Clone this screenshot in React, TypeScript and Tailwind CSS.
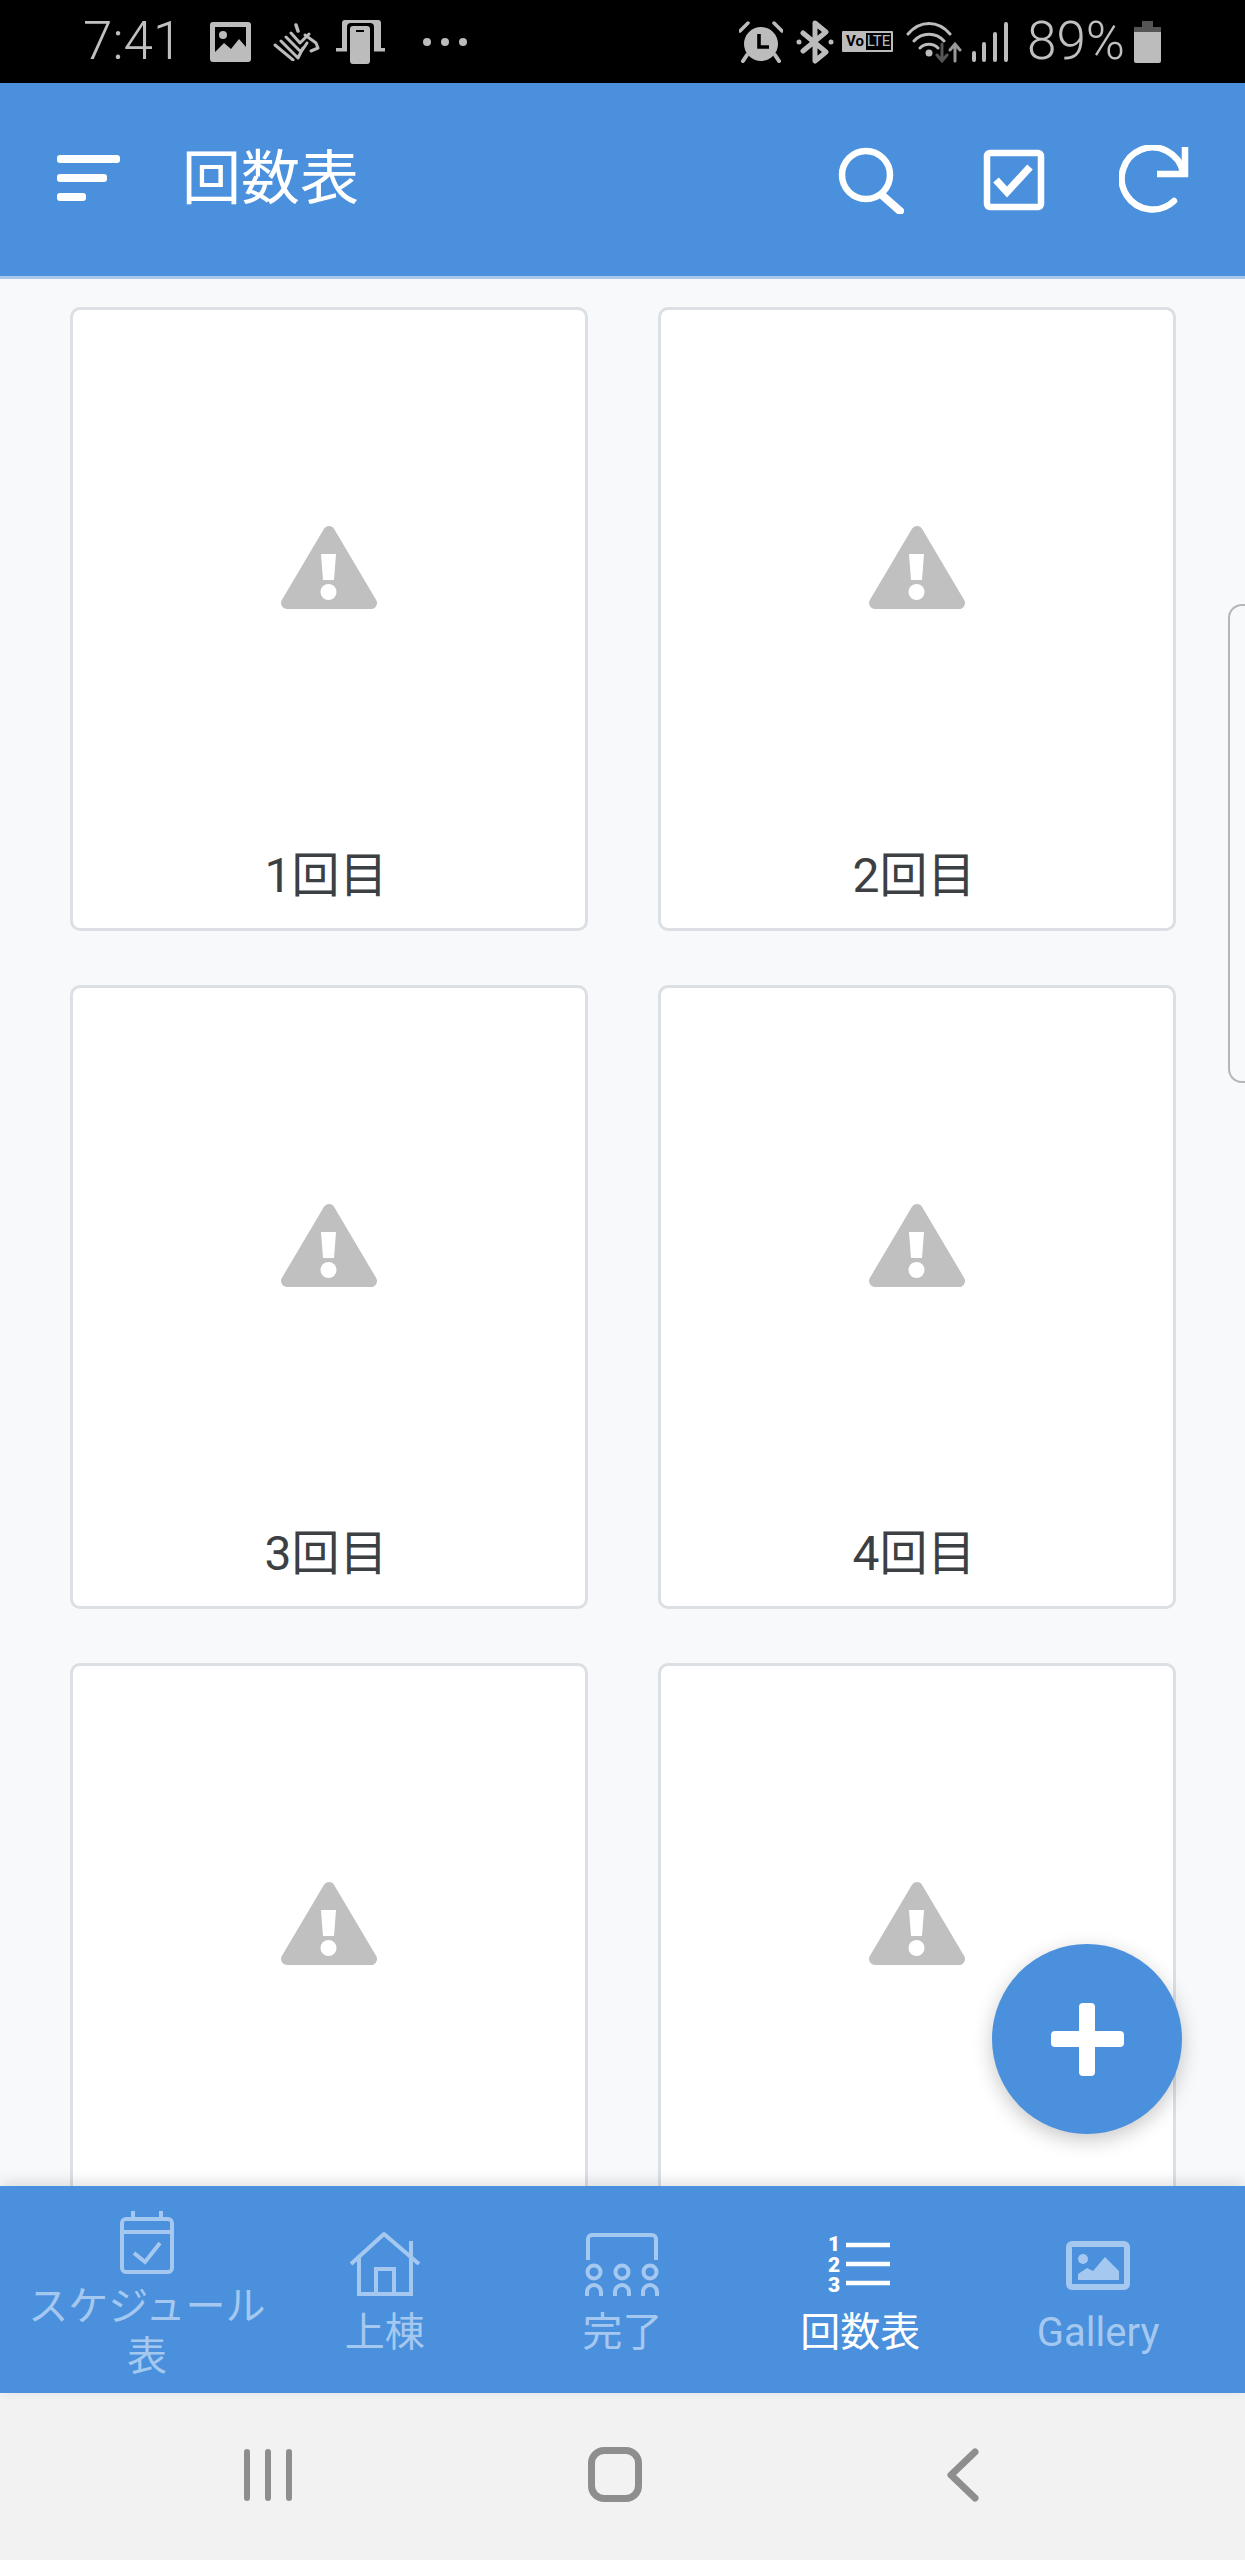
const FONT = "font-['Roboto','Noto_Sans_CJK_JP',sans-serif]";

function StatusLeft() {
  return (
    <div className="flex items-center">
      <span className="ml-[83px] w-[98px] text-[53px] font-light leading-[83px] text-[#c0c0c0]">7:41</span>
      <svg className="ml-[29px]" width="41" height="40" viewBox="0 0 41 40">
        <rect width="41" height="40" rx="3" fill="#bcbcbc" />
        <rect x="5" y="5" width="31" height="30" fill="#000" />
        <circle cx="13" cy="13" r="4" fill="#bcbcbc" />
        <path d="M5 30 L14 21 L21 27 L29 17 L36 25 V35 H5 Z" fill="#bcbcbc" />
      </svg>
      <svg className="ml-[22px]" width="48" height="38" viewBox="0 0 48 38" fill="none" stroke="#bcbcbc" strokeWidth="3" strokeLinecap="round" strokeLinejoin="round">
        <path d="M2 22 L20 37 M8 18 L25 35 L30 25 M13 14 L28 29 L34 20 M18 10 L27 20 L36 11" />
        <path d="M23 2 L25 8" strokeWidth="3.5" />
        <path d="M32 12 L43 20 L45 25 L38 28" />
      </svg>
      <svg className="ml-[15px]" width="49" height="44" viewBox="0 0 49 44">
        <path d="M6 3 a3 3 0 0 1 3 -3 H42 a3 3 0 0 1 3 3 V31 H6 Z" fill="#bcbcbc" />
        <rect y="28" width="49" height="3.5" fill="#bcbcbc" />
        <rect x="11" y="3" width="27" height="41" rx="4" fill="#000" />
        <rect x="14" y="6" width="20" height="38" rx="3" fill="#bcbcbc" />
        <rect x="20" y="10" width="8" height="2" fill="#000" />
      </svg>
      <div className="ml-[38px] flex gap-[10px]">
        <div className="h-[8px] w-[8px] rounded-full bg-[#bcbcbc]" />
        <div className="h-[8px] w-[8px] rounded-full bg-[#bcbcbc]" />
        <div className="h-[8px] w-[8px] rounded-full bg-[#bcbcbc]" />
      </div>
    </div>
  );
}

function StatusRight() {
  return (
    <div className="flex items-center pr-[84px]">
      <svg width="44" height="42" viewBox="0 0 44 42">
        <path d="M1 10 L9 2 M35 2 L43 10" stroke="#bcbcbc" strokeWidth="3.5" strokeLinecap="round" />
        <path d="M8 34 L4 40 M36 34 L40 40" stroke="#bcbcbc" strokeWidth="4" strokeLinecap="round" />
        <circle cx="22" cy="23" r="17" fill="#bcbcbc" />
        <path d="M20 13 V26 H30" fill="none" stroke="#000" strokeWidth="3.6" />
      </svg>
      <svg className="ml-[13px]" width="38" height="44" viewBox="0 0 38 44" fill="none" stroke="#bcbcbc" strokeWidth="5" strokeLinejoin="round" strokeLinecap="round">
        <path d="M7 13 L30 32 L19 41 V3 L30 12 L7 31" />
        <circle cx="3" cy="22" r="1.5" fill="#bcbcbc" strokeWidth="2" />
        <circle cx="35" cy="22" r="1.5" fill="#bcbcbc" strokeWidth="2" />
      </svg>
      <div className="ml-[8px] flex h-[21px] w-[51px] items-center overflow-hidden rounded-[1px] border-2 border-[#bcbcbc] bg-black text-[16px] font-bold leading-none">
        <span className="flex h-full w-[22px] items-center justify-center bg-[#bcbcbc] text-[15px] text-black">Vo</span>
        <span className="flex h-full flex-1 items-center justify-center text-[15px] font-normal text-[#bcbcbc]">LTE</span>
      </div>
      <svg className="ml-[13px]" width="56" height="42" viewBox="0 0 56 42" fill="none" strokeLinecap="round">
        <path d="M2 13 C14 -1 32 -1 44 13 M8 20 C16 11 30 11 38 20 M14 27 C19 22 27 22 32 27" stroke="#bcbcbc" strokeWidth="3" />
        <circle cx="23" cy="32" r="3.5" fill="#bcbcbc" />
        <path d="M36 23 V38 M31 34 L36 40 L41 34" stroke="#555" strokeWidth="3" />
        <path d="M49 40 V26 M44 29 L49 23 L54 29" stroke="#999" strokeWidth="3" />
      </svg>
      <svg className="ml-[10px]" width="36" height="40" viewBox="0 0 36 40">
        <rect x="0" y="29" width="4" height="11" rx="2" fill="#bcbcbc" />
        <rect x="10" y="20" width="4" height="20" rx="2" fill="#bcbcbc" />
        <rect x="21" y="10" width="4" height="30" rx="2" fill="#bcbcbc" />
        <rect x="32" y="0" width="4" height="40" rx="2" fill="#bcbcbc" />
      </svg>
      <span className="ml-[19px] text-[53px] leading-[83px] font-light text-[#c0c0c0]">89%</span>
      <svg className="ml-[9px]" width="27" height="42" viewBox="0 0 27 42">
        <path d="M8 0 H19 V6 H27 V11 H0 V6 H8 Z" fill="#555" />
        <path d="M0 11 H27 V40 a2 2 0 0 1 -2 2 H2 a2 2 0 0 1 -2 -2 Z" fill="#bcbcbc" />
      </svg>
    </div>
  );
}

function Header() {
  return (
    <header className="relative z-10 flex h-[196px] shrink-0 items-center justify-between border-b-[3px] border-[#a9c6e8] bg-[#4a90dc] pb-[3px]">
      <div className="flex items-center">
        <div className="ml-[57px] flex w-[63px] flex-col gap-[11px]">
          <div className="h-[8px] w-[63px] rounded-[3px] bg-white" />
          <div className="h-[8px] w-[50px] rounded-[3px] bg-white" />
          <div className="h-[8px] w-[29px] rounded-[3px] bg-white" />
        </div>
        <h1 className="ml-[62px] text-[59px] font-normal leading-none text-white">回数表</h1>
      </div>
      <div className="flex items-center pr-[56px] pt-[3px]">
        <svg width="66" height="68" viewBox="0 0 66 68" fill="none" stroke="#fff" strokeWidth="6.5" strokeLinecap="round">
          <circle cx="28" cy="29" r="24" />
          <path d="M45 50 L62 65" strokeWidth="8" />
        </svg>
        <svg className="ml-[79px]" width="62" height="62" viewBox="0 0 62 62" fill="none" stroke="#fff">
          <rect x="4" y="4" width="54" height="54" rx="3" strokeWidth="6.5" />
          <path d="M13 31 L24 43 L47 18" strokeWidth="7.5" />
        </svg>
        <svg className="ml-[74px]" width="70" height="70" viewBox="0 0 70 70" fill="none" stroke="#fff" strokeWidth="6.5">
          <path d="M55 56 A31 31 0 1 1 64 27" strokeLinecap="round" />
          <path d="M66 2 V29 H38" />
        </svg>
      </div>
    </header>
  );
}

function Warning() {
  return (
    <svg width="96" height="84" viewBox="0 0 96 84">
      <polygon points="48,7 90,78 6,78" fill="#c0c0c0" stroke="#c0c0c0" strokeWidth="12" strokeLinejoin="round" />
      <path d="M40 29 H55 L53 55 H42 Z" fill="#fff" />
      <circle cx="47.5" cy="67" r="8" fill="#fff" />
    </svg>
  );
}

function Card({ label }: { label?: string }) {
  return (
    <div className="flex h-[624px] flex-col items-center rounded-[10px] border-[3px] border-[#dcdfe3] bg-white pt-[215px]">
      <Warning />
      {label && <div className="mr-[6px] mt-[239px] text-[48px] leading-[56px] text-[#3c4043]">{label}</div>}
    </div>
  );
}

const stroke = "#a5c8f0";

function NavCalendar() {
  return (
    <svg className="mb-[7px]" width="56" height="66" viewBox="0 0 56 66" fill="none" stroke={stroke} strokeWidth="4">
      <rect x="3" y="10" width="50" height="53" rx="4" />
      <path d="M14 2 V10 M42 2 V10 M3 23 H53" />
      <path d="M15 44 L26 53 L41 34" />
    </svg>
  );
}
function NavHouse() {
  return (
    <svg className="mb-[9px]" width="72" height="66" viewBox="0 0 72 66" fill="none" stroke={stroke} strokeWidth="4">
      <path d="M2 33 L35 3 L70 33" strokeLinejoin="round" />
      <path d="M10 26 V63 H62 V10" />
      <path d="M27 63 V38 H45 V63" />
    </svg>
  );
}
function NavPeople() {
  return (
    <svg className="mb-[9px]" width="74" height="66" viewBox="0 0 74 66" fill="none" stroke={stroke} strokeWidth="4">
      <path d="M3 29 V8 a4 4 0 0 1 4 -4 H67 a4 4 0 0 1 4 4 V29" />
      <circle cx="9" cy="41" r="6.5" />
      <circle cx="37" cy="41" r="6.5" />
      <circle cx="65" cy="41" r="6.5" />
      <path d="M2 65 V61 a7 7 0 0 1 14 0 V65 M30 65 V61 a7 7 0 0 1 14 0 V65 M58 65 V61 a7 7 0 0 1 14 0 V65" />
    </svg>
  );
}
function NavNumbers() {
  return (
    <svg className="mb-[9px]" width="66" height="66" viewBox="0 0 66 66">
      <g fill="#fff" fontFamily="Roboto, sans-serif" fontWeight="900" fontSize="21" textAnchor="middle">
        <text x="7" y="20">1</text>
        <text x="7" y="41">2</text>
        <text x="7" y="61">3</text>
      </g>
      <path d="M19 14 H63 M19 33 H63 M19 52 H63" stroke="#fff" strokeWidth="4.5" />
    </svg>
  );
}
function NavGallery() {
  return (
    <svg className="mb-[9px]" width="64" height="66" viewBox="0 0 64 66">
      <rect x="3" y="13" width="58" height="43" rx="3" fill="none" stroke={stroke} strokeWidth="6" />
      <circle cx="17" cy="28" r="5" fill={stroke} />
      <path d="M12 49 V43 L21 37 L27 40 L39 26 L53 40 V49 Z" fill={stroke} />
    </svg>
  );
}

function NavItem({ icon, label, active, tight }: { icon: React.ReactNode; label: string; active?: boolean; tight?: boolean }) {
  return (
    <div className="flex flex-col items-center justify-center pt-[12px]">
      {icon}
      <div className={`text-center text-[40px] ${tight ? "leading-[50px]" : "leading-[54px]"} ${active ? "text-white" : "text-[#a5c8f0]"}`}>{label}</div>
    </div>
  );
}

export default function App() {
  return (
    <div className={`relative flex h-[2560px] w-[1245px] flex-col overflow-hidden bg-[#f7f9fb] ${FONT}`}>
      <div className="flex h-[83px] shrink-0 items-center justify-between bg-black">
        <StatusLeft />
        <StatusRight />
      </div>
      <Header />
      <main className="min-h-0 flex-1 overflow-hidden pl-[70px] pr-[69px] pt-[28px]">
        <div className="grid grid-cols-2 gap-x-[70px] gap-y-[54px]">
          <Card label="1回目" />
          <Card label="2回目" />
          <Card label="3回目" />
          <Card label="4回目" />
          <Card />
          <Card />
        </div>
      </main>
      <nav className="relative z-10 grid h-[207px] shrink-0 grid-cols-5 bg-[#4a90dc] px-[28px] shadow-[0_-4px_14px_rgba(0,0,0,0.12)]">
        <NavItem icon={<NavCalendar />} label="スケジュール表" tight />
        <NavItem icon={<NavHouse />} label="上棟" />
        <NavItem icon={<NavPeople />} label="完了" />
        <NavItem icon={<NavNumbers />} label="回数表" active />
        <NavItem icon={<NavGallery />} label="Gallery" />
      </nav>
      <div className="flex h-[167px] shrink-0 items-center bg-[#f2f2f2] pb-[4px]">
        <div className="ml-[244px] flex gap-[15px]">
          <div className="h-[52px] w-[6px] rounded-full bg-[#8e8e8e]" />
          <div className="h-[52px] w-[6px] rounded-full bg-[#8e8e8e]" />
          <div className="h-[52px] w-[6px] rounded-full bg-[#8e8e8e]" />
        </div>
        <div className="ml-[296px] h-[55px] w-[54px] rounded-[16px] border-[7px] border-[#8e8e8e]" />
        <svg className="ml-[305px]" width="32" height="54" viewBox="0 0 32 54" fill="none" stroke="#8e8e8e" strokeWidth="7" strokeLinecap="round" strokeLinejoin="round">
          <path d="M28 4 L4 27 L28 50" />
        </svg>
      </div>
      {/* side handle */}
      <div className="absolute left-[1228px] top-[604px] h-[479px] w-[30px] rounded-l-[14px] border-2 border-[#b4b6b9]" />
      {/* floating action button */}
      <div className="absolute left-[992px] top-[1944px] z-20 flex h-[190px] w-[190px] items-center justify-center rounded-full bg-[#4a90dc] shadow-[0_6px_20px_rgba(0,0,0,0.22)]">
        <div className="relative h-[73px] w-[73px]">
          <div className="absolute left-0 top-[28px] h-[16px] w-[73px] rounded-[4px] bg-white" />
          <div className="absolute left-[28px] top-0 h-[73px] w-[16px] rounded-[4px] bg-white" />
        </div>
      </div>
    </div>
  );
}
